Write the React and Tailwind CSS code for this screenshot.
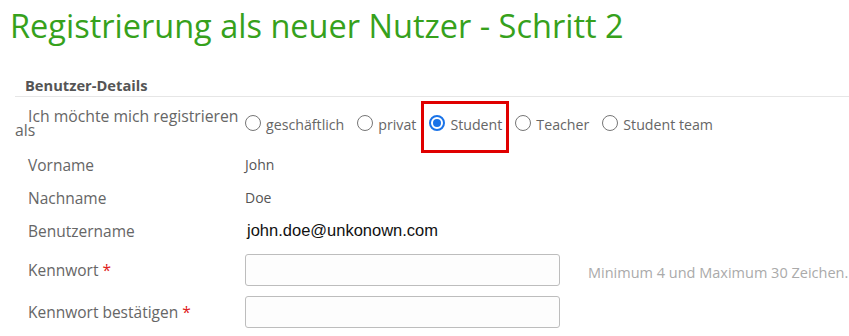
import React from 'react';

const options = [
  { label: 'geschäftlich' },
  { label: 'privat' },
  { label: 'Student', checked: true, marked: true },
  { label: 'Teacher' },
  { label: 'Student team' },
];

function Radio({ checked }) {
  if (checked) {
    return (
      <span className="inline-flex items-center justify-center w-[16px] h-[16px] rounded-full border-[2px] border-[#1a73e8] bg-white shrink-0">
        <span className="w-[8px] h-[8px] rounded-full bg-[#1a73e8]" />
      </span>
    );
  }
  return <span className="inline-block w-[16px] h-[16px] rounded-full border border-[#767676] bg-white shrink-0" />;
}

function Row({ label, required, height, children, tall }) {
  return (
    <div className={`flex items-center ${height}`}>
      <div className={`w-[230px] shrink-0 indent-[13px] text-[#666] ${tall ? 'text-[15.75px] leading-[14px]' : 'text-[15.5px] leading-[20px]'}`}>
        {label}
        {required && <span className="text-[#e02020]"> *</span>}
      </div>
      <div className="flex items-center flex-1">{children}</div>
    </div>
  );
}

export default function App() {
  return (
    <div className="w-[849px] h-[336px] overflow-hidden bg-white font-['Open_Sans',sans-serif]">
      <h1 className="pl-[10px] pt-[4px] text-[32.5px] leading-[44px] text-[#36a11c] font-normal">
        Registrierung als neuer Nutzer - Schritt 2
      </h1>

      <div className="ml-[15px] mt-[27px] border-b border-[#e6e6e6] pb-[1px]">
        <div className="pl-[10px] text-[14.7px] leading-[20px] font-bold text-[#555]">Benutzer-Details</div>
      </div>

      <div className="ml-[15px]">
        <Row label="Ich möchte mich registrieren als" height="h-[51px]" tall>
          <div className="flex items-center gap-[13px] pt-[1px] text-[14.2px] text-[#666]">
            {options.map((o) => (
              <label key={o.label} className="relative flex items-center gap-[5px] leading-[20px]">
                <Radio checked={o.checked} />
                <span className="pt-[3px]">{o.label}</span>
                {o.marked && (
                  <span className="absolute left-[-8px] right-[-7px] top-[-11px] bottom-[-18px] border-[3px] border-[#e00000]" />
                )}
              </label>
            ))}
          </div>
        </Row>

        <Row label="Vorname" height="h-[33px]">
          <span className="text-[14px] text-[#555]">John</span>
        </Row>

        <Row label="Nachname" height="h-[33px]">
          <span className="text-[14px] text-[#555]">Doe</span>
        </Row>

        <Row label="Benutzername" height="h-[33px]">
          <span className="pl-[2px] text-[16.5px] text-[#111] font-['Liberation_Sans',Arial,sans-serif]">john.doe@unkonown.com</span>
        </Row>

        <Row label="Kennwort" required height="h-[45px]">
          <input
            type="password"
            className="w-[315px] h-[32px] rounded-[3px] border border-[#bdbdbd] bg-[#fdfdfd] outline-none"
          />
          <span className="ml-[28px] pt-[6px] text-[14.5px] text-[#aaa] whitespace-nowrap">
            Minimum 4 und Maximum 30 Zeichen.
          </span>
        </Row>

        <Row label="Kennwort bestätigen" required height="h-[40px]">
          <input
            type="password"
            className="w-[315px] h-[32px] rounded-[3px] border border-[#bdbdbd] bg-[#fdfdfd] outline-none"
          />
        </Row>
      </div>
    </div>
  );
}
